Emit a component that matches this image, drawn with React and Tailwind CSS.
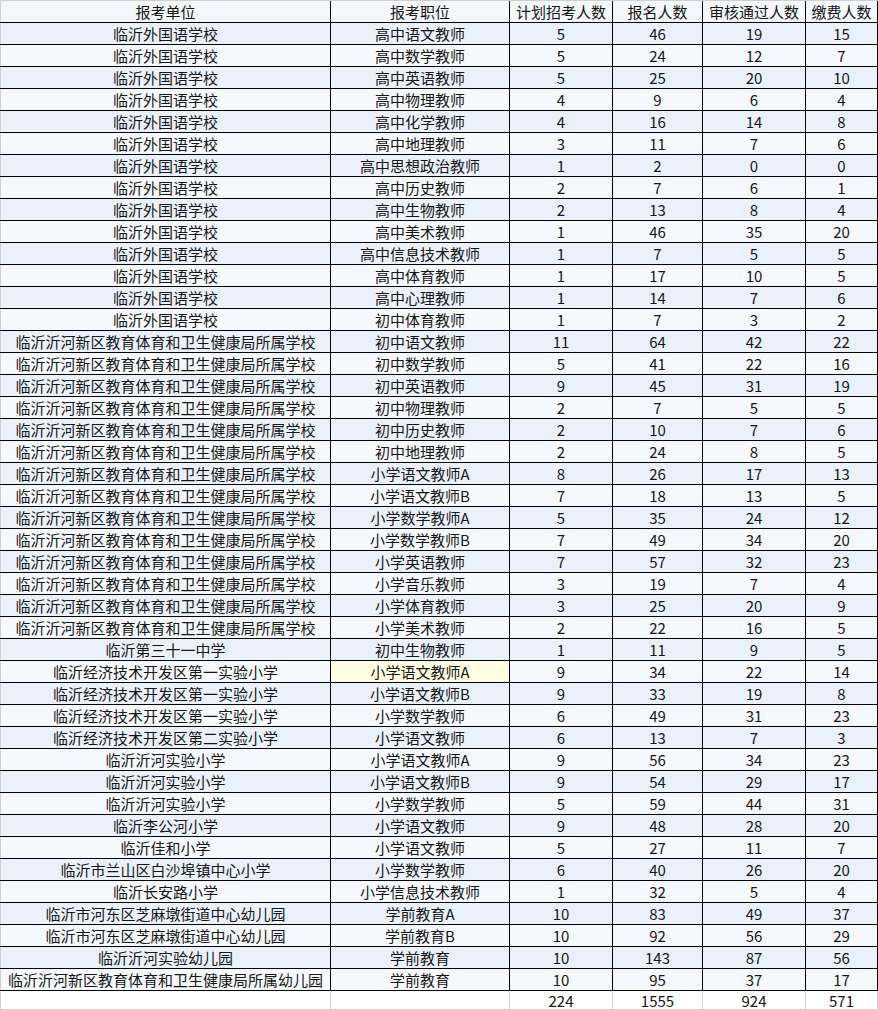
import React from "react";

const A = "临沂外国语学校";
const B = "临沂沂河新区教育体育和卫生健康局所属学校";
const rows = [
  [A, "高中语文教师", 5, 46, 19, 15],
  [A, "高中数学教师", 5, 24, 12, 7],
  [A, "高中英语教师", 5, 25, 20, 10],
  [A, "高中物理教师", 4, 9, 6, 4],
  [A, "高中化学教师", 4, 16, 14, 8],
  [A, "高中地理教师", 3, 11, 7, 6],
  [A, "高中思想政治教师", 1, 2, 0, 0],
  [A, "高中历史教师", 2, 7, 6, 1],
  [A, "高中生物教师", 2, 13, 8, 4],
  [A, "高中美术教师", 1, 46, 35, 20],
  [A, "高中信息技术教师", 1, 7, 5, 5],
  [A, "高中体育教师", 1, 17, 10, 5],
  [A, "高中心理教师", 1, 14, 7, 6],
  [A, "初中体育教师", 1, 7, 3, 2],
  [B, "初中语文教师", 11, 64, 42, 22],
  [B, "初中数学教师", 5, 41, 22, 16],
  [B, "初中英语教师", 9, 45, 31, 19],
  [B, "初中物理教师", 2, 7, 5, 5],
  [B, "初中历史教师", 2, 10, 7, 6],
  [B, "初中地理教师", 2, 24, 8, 5],
  [B, "小学语文教师A", 8, 26, 17, 13],
  [B, "小学语文教师B", 7, 18, 13, 5],
  [B, "小学数学教师A", 5, 35, 24, 12],
  [B, "小学数学教师B", 7, 49, 34, 20],
  [B, "小学英语教师", 7, 57, 32, 23],
  [B, "小学音乐教师", 3, 19, 7, 4],
  [B, "小学体育教师", 3, 25, 20, 9],
  [B, "小学美术教师", 2, 22, 16, 5],
  ["临沂第三十一中学", "初中生物教师", 1, 11, 9, 5],
  ["临沂经济技术开发区第一实验小学", "小学语文教师A", 9, 34, 22, 14],
  ["临沂经济技术开发区第一实验小学", "小学语文教师B", 9, 33, 19, 8],
  ["临沂经济技术开发区第一实验小学", "小学数学教师", 6, 49, 31, 23],
  ["临沂经济技术开发区第二实验小学", "小学语文教师", 6, 13, 7, 3],
  ["临沂沂河实验小学", "小学语文教师A", 9, 56, 34, 23],
  ["临沂沂河实验小学", "小学语文教师B", 9, 54, 29, 17],
  ["临沂沂河实验小学", "小学数学教师", 5, 59, 44, 31],
  ["临沂李公河小学", "小学语文教师", 9, 48, 28, 20],
  ["临沂佳和小学", "小学语文教师", 5, 27, 11, 7],
  ["临沂市兰山区白沙埠镇中心小学", "小学数学教师", 6, 40, 26, 20],
  ["临沂长安路小学", "小学信息技术教师", 1, 32, 5, 4],
  ["临沂市河东区芝麻墩街道中心幼儿园", "学前教育A", 10, 83, 49, 37],
  ["临沂市河东区芝麻墩街道中心幼儿园", "学前教育B", 10, 92, 56, 29],
  ["临沂沂河实验幼儿园", "学前教育", 10, 143, 87, 56],
  ["临沂沂河新区教育体育和卫生健康局所属幼儿园", "学前教育", 10, 95, 37, 17],
];

const widths = ["w-[331px] border-l border-l-[#d0d0d0]", "w-[179px]", "w-[103px]", "w-[90px]", "w-[103px]", "w-[72px]"];

export default function App() {
  return (
    <div
      className="w-[878px] h-[1010px] bg-white text-[15px] leading-[21px] text-[#151515] overflow-hidden"
      style={{ fontFamily: '"Noto Sans CJK SC", "Noto Sans", sans-serif' }}
    >
      <div className="flex h-[23px] bg-[#f4f7fb] border-t border-t-[#d0d0d0] border-b border-b-black">
        {["报考单位", "报考职位", "计划招考人数", "报名人数", "审核通过人数", "缴费人数"].map((h, i) => (
          <div key={i} className={`${widths[i]} shrink-0 flex items-center justify-center border-r border-r-black whitespace-nowrap`}>
            {h}
          </div>
        ))}
      </div>
      {rows.map((r, ri) => (
        <div key={ri} className={`flex h-[22px] border-b border-b-black ${ri % 2 === 0 ? "bg-[#eaf1fb]" : "bg-[#f5f8fc]"}`}>
          {r.map((c, ci) => (
            <div
              key={ci}
              className={`${widths[ci]} shrink-0 flex items-center justify-center border-r border-r-black whitespace-nowrap ${ri === 29 && ci === 1 ? "bg-[#fffde2]" : ""}`}
            >
              {c}
            </div>
          ))}
        </div>
      ))}
      <div className="flex h-[19px] bg-white border-b border-b-[#d0d0d0]">
        {["", "", 224, 1555, 924, 571].map((c, i) => (
          <div key={i} className={`${widths[i]} shrink-0 flex items-center justify-center border-r border-r-[#d4d4d4] whitespace-nowrap`}>
            {c}
          </div>
        ))}
      </div>
    </div>
  );
}
